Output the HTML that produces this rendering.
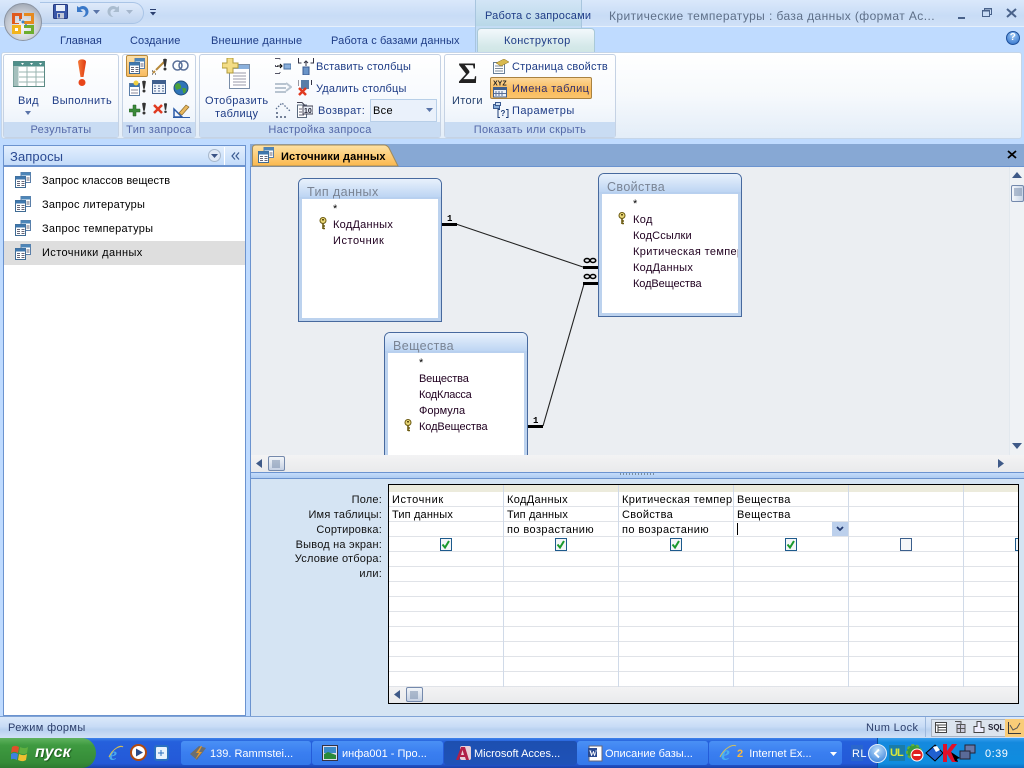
<!DOCTYPE html>
<html><head><meta charset="utf-8"><title>Access</title>
<style>
html,body{margin:0;padding:0;width:1024px;height:768px;overflow:hidden;background:#bfdbff}
body{position:relative;font:11px/14px "Liberation Sans",sans-serif;letter-spacing:.35px;color:#000}
div,span,svg{position:absolute;box-sizing:border-box}
.t{white-space:nowrap;height:14px;margin-top:1px}
.b{color:#1e3c86}
.c{color:#5468a8;text-align:center}
.g{position:absolute;top:54px;height:84px;border:1px solid #c5d2e4;border-radius:3px;background:linear-gradient(#fff 0,#f6f9fd 60%,#e6eff9 100%)}
.cap{position:absolute;left:0;right:0;bottom:0;height:15px;background:#c9dcf3;color:#5468a8;text-align:center;line-height:16px;letter-spacing:.3px}
.tb{position:absolute;width:144px;background:#fff;border:1px solid #47699e;border-radius:6px 6px 0 0;}
.tb .h{left:0;right:0;top:0;height:20px;background:linear-gradient(#e8f1fc,#bdd5f3);border-radius:5px 5px 0 0;border-bottom:2px solid #b8d0ef;color:#7a8494;font-size:12.5px;line-height:24px;padding-left:8px;letter-spacing:.4px}
.tb .in{left:0;right:0;top:20px;bottom:0;border-left:3px solid #bcd2ee;border-right:3px solid #bcd2ee;border-bottom:3px solid #bcd2ee;background:#fff}
.f{color:#200020}
.lbl{position:absolute;right:642px;text-align:right;white-space:nowrap;color:#111;height:14px;margin-top:1px;letter-spacing:.2px}
.tbtn{position:absolute;top:741px;height:24px;border-radius:3px;background:linear-gradient(#4a90f5,#3a7ef0 50%,#3479ea);color:#fff;line-height:26px;white-space:nowrap;letter-spacing:0}
.chk{position:absolute;width:12px;height:13px;background:#f4f6f8;border:1px solid #1d5a8c}
</style></head><body>
<svg width="0" height="0" style="position:absolute"><defs>
<symbol id="q" viewBox="0 0 16 16"><rect x="6" y="0.5" width="9.5" height="10" fill="#fff" stroke="#5a7ea8"/><rect x="6" y="0.5" width="9.5" height="3" fill="#4d86b8"/><rect x="0.5" y="4.5" width="10" height="11" fill="#fff" stroke="#3f6b94"/><rect x="0.5" y="4.5" width="10" height="3" fill="#3f77ad"/><path d="M2 9.5h3M2 11.5h3M2 13.5h3M6.5 9.5h3M6.5 11.5h3M6.5 13.5h3M11.5 6h3M11.5 8h3" stroke="#667" fill="none"/></symbol>
<symbol id="key" viewBox="0 0 9 13"><circle cx="4" cy="3.5" r="3" fill="#e8d676" stroke="#6b5a10"/><path d="M4 6v6M4 9h2M4 11.500h2" stroke="#6b5a10" fill="none" stroke-width="1.600"/><rect x="3" y="2" width="2" height="1.500" fill="#5a4a10"/></symbol>
<symbol id="ex" viewBox="0 0 8 16"><path d="M1.500 1.500C1.500 0 6.500 0 6.500 1.500L5 11H3z" fill="#333"/><circle cx="4" cy="14" r="2" fill="#333"/></symbol>
<symbol id="ck" viewBox="0 0 12 13"><path d="M2.500 6.500l2.500 3 4-6.500" stroke="#1a9a2c" stroke-width="2" fill="none"/></symbol>
</defs></svg>

<!-- title bar -->
<div style="left:0;top:0;width:1024px;height:26px;background:linear-gradient(#dae8fb,#c8dcf6 60%,#cfe0f7)"></div>
<div style="left:0;top:26px;width:1024px;height:1px;background:#e6f0fc"></div>
<div style="left:40px;top:2px;width:104px;height:22px;border:1px solid #a9c4e6;border-left:none;border-radius:0 12px 12px 0;background:linear-gradient(#dfeafa,#c0d4ef)"></div>
<!-- QAT -->
<svg style="left:53px;top:4px" width="15" height="15" viewBox="0 0 15 15"><rect x=".5" y=".5" width="14" height="14" rx="1" fill="#3a57a8" stroke="#273b80"/><rect x="3" y="1" width="9" height="6" fill="#e8eef8"/><rect x="4" y="9" width="7" height="5.500" fill="#c3c8d6"/><rect x="5" y="10" width="2" height="3.500" fill="#3a57a8"/></svg>
<svg style="left:75px;top:4px" width="14" height="15" viewBox="0 0 14 15"><path d="M2 2v6h6L5.500 5.800C8 4 11 6 10.500 9c-.3 2-1.500 3-3 4 4 0 6-2.500 6-5.500C13.500 3 8 0 4 3.500z" fill="#3a78c8"/></svg>
<svg style="left:93px;top:10px" width="7" height="4"><path d="M0 0h7L3.500 4z" fill="#5a74a8"/></svg>
<svg style="left:107px;top:4px" width="14" height="15" viewBox="0 0 14 15"><path d="M12 2v6H6l2.500-2.200C6 4 3 6 3.500 9c.3 2 1.500 3 3 4-4 0-6-2.500-6-5.500C.5 3 6 0 10 3.500z" fill="#aabccf"/></svg>
<svg style="left:126px;top:10px" width="7" height="4"><path d="M0 0h7L3.500 4z" fill="#a5b6cc"/></svg>
<svg style="left:150px;top:9px" width="7" height="7"><path d="M0 0h6v1H0zM0 3h6L3 6.500z" fill="#2a3f70"/></svg>

<!-- contextual header -->
<div style="left:475px;top:0;width:107px;height:26px;background:linear-gradient(#d3e5f6,#b9d8e8);border-left:1px solid #a8c5de;border-right:1px solid #a8c5de"></div>
<div class="t b" style="left:485px;top:8px;letter-spacing:.2px">Работа с запросами</div>
<div class="t" style="left:609px;top:8px;color:#5e6f88;font-size:12px;letter-spacing:.41px">Критические температуры : база данных (формат Ac...</div>
<div style="left:958px;top:17px;width:7px;height:2px;background:#49628a"></div>
<svg style="left:982px;top:8px" width="10" height="9"><rect x="2.500" y=".5" width="7" height="6" fill="none" stroke="#49628a"/><rect x=".5" y="2.500" width="7" height="6" fill="#c8dcf6" stroke="#49628a"/><path d="M.5 3h7M2.500 1h7" stroke="#49628a"/></svg>
<svg style="left:1006px;top:8px" width="11" height="10"><path d="M1 1l9 8M10 1L1 9" stroke="#49628a" stroke-width="2"/></svg>

<!-- tabs row -->
<div style="left:0;top:27px;width:1024px;height:26px;background:#bfdbff"></div>
<div class="t b" style="left:60px;top:33px;letter-spacing:0">Главная</div>
<div class="t b" style="left:130px;top:33px;letter-spacing:.1px">Создание</div>
<div class="t b" style="left:211px;top:33px;letter-spacing:.2px">Внешние данные</div>
<div class="t b" style="left:331px;top:33px;letter-spacing:.12px">Работа с базами данных</div>
<div style="left:475px;top:26px;width:107px;height:26px;border-left:1px solid #a8c5de;border-right:1px solid #a8c5de;background:linear-gradient(#c3dcf3,#bfdbff)"></div>
<div style="left:477px;top:28px;width:118px;height:25px;border:1px solid #a9c9d8;border-bottom:none;border-radius:4px 4px 0 0;background:linear-gradient(#f3f8fc,#d5e9ea 70%,#cfe6e4)"></div>
<div class="t b" style="left:504px;top:33px">Конструктор</div>
<div style="left:1006px;top:31px;width:14px;height:14px;border-radius:50%;background:radial-gradient(circle at 50% 30%,#9cc8f5,#2a6cc8);border:1px solid #1d4f9a;color:#fff;font:bold 10px/12px 'Liberation Sans';text-align:center">?</div>

<!-- office button -->
<div style="left:4px;top:3px;width:38px;height:38px;border-radius:50%;background:radial-gradient(circle at 50% 65%,#f7f7f7,#c4c9d2 55%,#8f98a5 95%);border:1px solid #8b94a2"></div>
<svg style="left:11px;top:11px" width="24" height="24" viewBox="0 0 24 24"><path d="M1 2h10v6H8V5H4v7h4v1H1z" fill="#e05a1c"/><path d="M13 2h10v11H13v-3h7V5h-7z" fill="#e68a1e"/><path d="M1 14h9v9H1z" fill="#f2b41c"/><path d="M13 14h10v9H13v-3h7v-3h-7z" fill="#6dae2e"/><rect x="4" y="17" width="3" height="3" fill="#fff"/><circle cx="12" cy="11" r="1.500" fill="#3b82c4"/><circle cx="9" cy="9" r="1" fill="#3b82c4"/><circle cx="15" cy="14" r="1" fill="#3b82c4"/></svg>

<!-- ribbon -->
<div style="left:1px;top:52px;width:1021px;height:87px;border:1px solid #c5d5e8;border-radius:3px;background:linear-gradient(#fff,#f6f9fc 50%,#e3edf8)"></div>

<div class="g" style="left:3px;width:116px"><div class="cap">Результаты</div></div>
<svg style="left:13px;top:61px" width="32" height="26" viewBox="0 0 32 26"><rect x=".5" y=".5" width="31" height="25" fill="#fff" stroke="#5a8a84"/><rect x=".5" y=".5" width="31" height="5" fill="#4f8f8a"/><rect x=".5" y="5" width="5" height="20" fill="#a5c0bd"/><path d="M6 11h25M6 16h25M6 21h25M14 5v20M23 5v20" stroke="#9ab4b0"/><path d="M8 2h3l-1.500 2zM17 2h3l-1.500 2zM26 2h3l-1.500 2z" fill="#fff"/></svg>
<div class="t b" style="left:18px;top:93px">Вид</div>
<svg style="left:25px;top:111px" width="6" height="4"><path d="M0 0h6L3 4z" fill="#5a74a8"/></svg>
<svg style="left:76px;top:59px" width="12" height="28" viewBox="0 0 12 28"><defs><linearGradient id="rg" x1="0" x2="1"><stop offset="0" stop-color="#f47a3a"/><stop offset="1" stop-color="#e03a10"/></linearGradient></defs><path d="M2 3C2-.5 10-.5 10 3L7.500 18h-3z" fill="url(#rg)"/><circle cx="6" cy="23.500" r="3.500" fill="#e8451a"/></svg>
<div class="t b" style="left:52px;top:93px;letter-spacing:.4px">Выполнить</div>

<div class="g" style="left:122px;width:74px"><div class="cap">Тип запроса</div></div>
<div style="left:126px;top:55px;width:22px;height:22px;background:linear-gradient(#fce0a8,#f9bc60);border:1px solid #b98a3c;border-radius:2px"></div>
<svg style="left:129px;top:58px" width="16" height="16"><use href="#q"/></svg>
<svg style="left:151px;top:58px" width="17" height="17" viewBox="0 0 17 17"><path d="M2 15l2-2M5 12l8-8" stroke="#b88a3c" stroke-width="2"/><path d="M1 16h1M1 13h1M4 16h1" stroke="#222"/><use href="#ex" x="11" y="0" width="6" height="13"/></svg>
<svg style="left:172px;top:59px" width="17" height="13" viewBox="0 0 17 13"><circle cx="5.500" cy="6.500" r="4.500" fill="none" stroke="#5a7098" stroke-width="1.500"/><circle cx="11.500" cy="6.500" r="4.500" fill="none" stroke="#5a7098" stroke-width="1.500"/></svg>
<svg style="left:129px;top:80px" width="18" height="16" viewBox="0 0 18 16"><rect x=".5" y="3.500" width="10" height="12" fill="#fff" stroke="#5a7ea8"/><rect x="1" y="4" width="9" height="3" fill="#3f77ad"/><path d="M2 10h7M2 13h7" stroke="#889"/><circle cx="7" cy="3" r="2.500" fill="#f0d040"/><use href="#ex" x="12" y="0" width="6" height="13"/></svg>
<svg style="left:152px;top:80px" width="14" height="14" viewBox="0 0 14 14"><rect x=".5" y=".5" width="13" height="13" fill="#eef3fa" stroke="#3f5f8e"/><rect x="1" y="1" width="12" height="3" fill="#3f5f8e"/><path d="M2 6h2M6 6h2M10 6h2M2 8.500h2M6 8.500h2M10 8.500h2M2 11h2M6 11h2M10 11h2" stroke="#5a7098"/></svg>
<svg style="left:173px;top:80px" width="16" height="16" viewBox="0 0 16 16"><circle cx="8" cy="8" r="7" fill="#2f74b8" stroke="#20507f"/><path d="M3 4c3-2 4 0 5 2s-1 3-2 3-2 2-3 0-2-3 0-5zM10 8c2 0 4 0 3 3s-3 3-3 1-2-4 0-4z" fill="#4aa03a"/></svg>
<svg style="left:129px;top:102px" width="18" height="16" viewBox="0 0 18 16"><path d="M4 3h3v4h4v3H7v4H4v-4H0V7h4z" fill="#3a8a3a" stroke="#205a20" stroke-width=".5"/><use href="#ex" x="12" y="0" width="6" height="13"/></svg>
<svg style="left:153px;top:102px" width="15" height="15" viewBox="0 0 15 15"><path d="M1 3l8 8M9 3l-8 8" stroke="#e03a20" stroke-width="2.500"/><use href="#ex" x="10" y="0" width="5" height="12"/></svg>
<svg style="left:173px;top:103px" width="17" height="15" viewBox="0 0 17 15"><path d="M1 14V6l8 8z" fill="none" stroke="#2a5aa8" stroke-width="1.500"/><path d="M0 14.500h17" stroke="#2a5aa8"/><path d="M6 10l7-8 3 2-7 8z" fill="#e8b860" stroke="#806020" stroke-width=".6"/></svg>

<div class="g" style="left:199px;width:242px"><div class="cap">Настройка запроса</div></div>
<svg style="left:222px;top:58px" width="28" height="31" viewBox="0 0 28 31"><rect x="7.500" y="6.500" width="20" height="24" fill="#fff" stroke="#7a8ea8"/><rect x="8" y="7" width="19" height="4" fill="#8ab0dc"/><path d="M11 15h13M11 18h13M11 21h13M11 24h13M11 27h13" stroke="#99a"/><path d="M5 0h6v5h5v5h-5v5H5v-5H0V5h5z" fill="#f3dd86" stroke="#b09a3a"/></svg>
<div class="t b" style="left:205px;top:93px">Отобразить</div>
<div class="t b" style="left:215px;top:106px;letter-spacing:.3px">таблицу</div>
<svg style="left:275px;top:58px" width="16" height="16" viewBox="0 0 16 16"><path d="M0 .5h5M5 .5v1M0 7.500h1M0 15.500h5M5 15v-1M0 8.500h3" stroke="#556" fill="none"/><path d="M2 8h5M5 6l2 2-2 2" stroke="#000" fill="none"/><rect x="9" y="6" width="7" height="5" fill="#8ab0dc" stroke="#4a70a0"/></svg>
<svg style="left:298px;top:58px" width="16" height="17" viewBox="0 0 16 17"><path d="M.5 0v5h3M15.500 0v5h-3M8 3v5M6 5l2-2 2 2" stroke="#334" fill="none"/><rect x="5" y="9" width="6" height="8" fill="#6a94c8" stroke="#3a5a90"/></svg>
<div class="t b" style="left:316px;top:59px;letter-spacing:.13px">Вставить столбцы</div>
<svg style="left:275px;top:80px" width="17" height="15" viewBox="0 0 17 15"><rect x="0" y="3" width="11" height="2" fill="#b8c4d0"/><rect x="0" y="7" width="11" height="2" fill="#b8c4d0"/><rect x="0" y="11" width="11" height="2" fill="#b8c4d0"/><path d="M11 3l5 4-5 4" fill="none" stroke="#b8c4d0" stroke-width="2"/></svg>
<svg style="left:298px;top:80px" width="14" height="16" viewBox="0 0 14 16"><rect x="3" y="0" width="8" height="9" fill="#5a7ea8"/><path d="M0 0v6M13.500 0v5" stroke="#334"/><path d="M1 8l7 7M8 8l-7 7" stroke="#e03a20" stroke-width="2.500"/></svg>
<div class="t b" style="left:316px;top:81px;letter-spacing:.15px">Удалить столбцы</div>
<svg style="left:275px;top:102px" width="16" height="16" viewBox="0 0 16 16"><path d="M1 7l6-6 8 8" fill="none" stroke="#5a6e90" stroke-dasharray="1.500 1.500" stroke-width="1.300"/><path d="M1 15h2M5 15h2M9 15h2M1 11h2" stroke="#4a5a78" stroke-width="1.500"/></svg>
<svg style="left:297px;top:102px" width="16" height="16" viewBox="0 0 16 16"><rect x=".5" y="3" width="9" height="12.500" fill="#fff" stroke="#5a6a7e"/><path d="M0 .5h5l3 3" stroke="#445" fill="none"/><rect x="6" y="4" width="10" height="8" fill="#e8eef6" stroke="#445"/><text x="7" y="11" font-size="7" font-weight="bold" font-family="Liberation Sans" letter-spacing="0" fill="#223">10</text><path d="M2 7h3M2 10h3M2 13h5" stroke="#667"/></svg>
<div class="t b" style="left:318px;top:103px">Возврат:</div>
<div style="left:370px;top:99px;width:67px;height:23px;border:1px solid #b8cfe8;background:#eaf1fb"></div>
<div class="t" style="left:373px;top:103px">Все</div>
<svg style="left:426px;top:108px" width="7" height="4"><path d="M0 0h7L3.500 4z" fill="#5a74a8"/></svg>

<div class="g" style="left:444px;width:172px"><div class="cap">Показать или скрыть</div></div>
<div class="t" style="left:458px;top:57px;font:bold 30px/32px 'Liberation Serif',serif;color:#222;height:32px;letter-spacing:0">Σ</div>
<div class="t b" style="left:452px;top:93px;color:#24406e">Итоги</div>
<svg style="left:493px;top:59px" width="16" height="15" viewBox="0 0 16 15"><rect x=".5" y="3.500" width="11" height="11" fill="#fff" stroke="#667e98"/><path d="M2 7h8M2 9.500h8M2 12h8" stroke="#7a8a9a"/><path d="M3 4l8-4 5 3-8 4z" fill="#d8ba50" stroke="#8a7020" stroke-width=".5"/></svg>
<div class="t b" style="left:512px;top:59px;letter-spacing:.2px">Страница свойств</div>
<div style="left:490px;top:77px;width:102px;height:22px;background:linear-gradient(#fcd79a,#f9ba5a 60%,#fbc56e);border:1px solid #a98240;border-radius:2px"></div>
<svg style="left:493px;top:79px" width="15" height="19" viewBox="0 0 15 19"><text x="0" y="6.500" font-size="7" font-weight="bold" font-family="Liberation Sans" letter-spacing="0" fill="#222">XYZ</text><rect x=".5" y="8.500" width="13" height="9.500" fill="#eef3fa" stroke="#3f5f8e"/><rect x="1" y="9" width="12" height="2" fill="#3f5f8e"/><path d="M3 12v5M6 12v5M9 12v5M1 14.500h12" stroke="#5a7098"/></svg>
<div class="t" style="left:512px;top:81px;color:#33306e;letter-spacing:.4px">Имена таблиц</div>
<svg style="left:493px;top:102px" width="16" height="16" viewBox="0 0 16 16"><rect x=".5" y="2.500" width="6" height="4" fill="#8ab0dc" stroke="#3a5a90"/><rect x="2.500" y=".5" width="5" height="3" fill="#cfe0f5" stroke="#3a5a90"/><path d="M8 7.500H6v8h2M14 7.500h2v8h-2" stroke="#1f3f78" fill="none" transform="translate(-1 0)"/><text x="7.500" y="14" font-size="8" font-weight="bold" font-family="Liberation Sans" letter-spacing="0" fill="#1f3f78">?</text></svg>
<div class="t b" style="left:512px;top:103px;letter-spacing:.45px">Параметры</div>

<!-- middle bg -->
<div style="left:0;top:140px;width:1024px;height:5px;background:#bfdbff"></div>
<div style="left:0;top:145px;width:250px;height:571px;background:#bfdbff"></div>

<!-- nav pane -->
<div style="left:3px;top:145px;width:243px;height:22px;background:linear-gradient(#e3effd,#c3dbf9);border:1px solid #6b93cf;border-bottom:2px solid #6b93cf"></div>
<div class="t" style="left:10px;top:149px;font-size:13px;color:#2b4a92;letter-spacing:.1px">Запросы</div>
<div style="left:208px;top:149px;width:13px;height:13px;border-radius:50%;background:#dfe8f5;border:1px solid #a8b8cc"></div>
<svg style="left:211px;top:154px" width="7" height="4"><path d="M0 0h7L3.500 4z" fill="#3a5284"/></svg>
<div style="left:224px;top:147px;width:1px;height:18px;background:#fff"></div>
<svg style="left:231px;top:152px" width="9" height="8"><path d="M4 .5L1 4l3 3.500M8 .5L5 4l3 3.500" stroke="#3a5a90" fill="none" stroke-width="1.200"/></svg>
<div style="left:3px;top:167px;width:243px;height:549px;background:#fff;border-left:1px solid #6b93cf;border-right:1px solid #6b93cf;border-bottom:1px solid #6b93cf"></div>
<div style="left:4px;top:241px;width:241px;height:24px;background:#dedede"></div>
<svg style="left:15px;top:172px" width="16" height="16"><use href="#q"/></svg>
<svg style="left:15px;top:196px" width="16" height="16"><use href="#q"/></svg>
<svg style="left:15px;top:220px" width="16" height="16"><use href="#q"/></svg>
<svg style="left:15px;top:244px" width="16" height="16"><use href="#q"/></svg>
<div class="t" style="left:42px;top:173px;letter-spacing:.08px">Запрос классов веществ</div>
<div class="t" style="left:42px;top:197px;letter-spacing:.2px">Запрос литературы</div>
<div class="t" style="left:42px;top:221px;letter-spacing:.25px">Запрос температуры</div>
<div class="t" style="left:42px;top:245px;letter-spacing:.4px">Источники данных</div>

<!-- document tabs -->
<div style="left:250px;top:144px;width:774px;height:23px;background:#87a8d4;border-bottom:1px solid #6b93cf"></div>
<svg style="left:252px;top:144px" width="148" height="23" viewBox="0 0 148 23"><defs><linearGradient id="tg" x1="0" y1="0" x2="0" y2="1"><stop offset="0" stop-color="#fde2a6"/><stop offset="1" stop-color="#fbb84e"/></linearGradient></defs><path d="M.5 22V4Q.5 1 4 1H132Q135 1 137 4L146 22z" fill="url(#tg)" stroke="#a08a5a"/></svg>
<svg style="left:258px;top:147px" width="16" height="16"><use href="#q"/></svg>
<div class="t" style="left:281px;top:149px;font-weight:bold;letter-spacing:.12px">Источники данных</div>
<svg style="left:1007px;top:150px" width="10" height="9"><path d="M1 1l8 7M9 1L1 8" stroke="#000" stroke-width="1.800"/></svg>

<!-- query area -->
<div style="left:250px;top:167px;width:774px;height:549px;background:#d5e4f3;border-left:1px solid #6b93cf"></div>
<div style="left:251px;top:167px;width:758px;height:288px;background:#ebeef2"></div>

<!-- relationships -->
<svg style="left:251px;top:167px" width="758" height="288" viewBox="251 167 758 288"><path d="M456 224L583 267M543 426L584 284" stroke="#222" fill="none" stroke-width="1.100"/><path d="M442 224.500h15M583 267.500h15M583 283.500h15M528 426.500h15" stroke="#000" stroke-width="3"/><text x="447" y="221" font-size="9" font-weight="bold" font-family="Liberation Mono" letter-spacing="0">1</text><text x="533" y="423" font-size="9" font-weight="bold" font-family="Liberation Mono" letter-spacing="0">1</text><g fill="none" stroke="#000" stroke-width="1.600"><ellipse cx="587" cy="260.500" rx="2.700" ry="2"/><ellipse cx="593" cy="260.500" rx="2.700" ry="2"/><ellipse cx="587" cy="276.500" rx="2.700" ry="2"/><ellipse cx="593" cy="276.500" rx="2.700" ry="2"/></g></svg>

<!-- tables -->
<div class="tb" style="left:298px;top:178px;height:144px"><div class="h" style="line-height:26px">Тип данных</div><div class="in"></div></div>
<div class="t" style="left:333px;top:201px">*</div>
<svg style="left:319px;top:217px" width="9" height="13"><use href="#key"/></svg>
<div class="t f" style="left:333px;top:217px;letter-spacing:.25px">КодДанных</div>
<div class="t f" style="left:333px;top:233px;letter-spacing:.55px">Источник</div>

<div class="tb" style="left:598px;top:173px;height:144px"><div class="h" style="line-height:26px">Свойства</div><div class="in"></div></div>
<div class="t" style="left:633px;top:196px">*</div>
<svg style="left:618px;top:212px" width="9" height="13"><use href="#key"/></svg>
<div class="t f" style="left:633px;top:212px">Код</div>
<div class="t f" style="left:633px;top:228px;letter-spacing:.15px">КодСсылки</div>
<div class="t f" style="left:633px;top:244px;width:105px;overflow:hidden">Критическая температура</div>
<div class="t f" style="left:633px;top:260px;letter-spacing:.25px">КодДанных</div>
<div class="t f" style="left:633px;top:276px;letter-spacing:-.1px">КодВещества</div>

<div style="left:384px;top:332px;width:144px;height:123px;overflow:hidden">
<div class="tb" style="left:0;top:0;height:144px"><div class="h" style="line-height:26px">Вещества</div><div class="in"></div></div>
</div>
<div class="t" style="left:419px;top:355px">*</div>
<div class="t f" style="left:419px;top:371px;letter-spacing:-.15px">Вещества</div>
<div class="t f" style="left:419px;top:387px;letter-spacing:-.25px">КодКласса</div>
<div class="t f" style="left:419px;top:403px;letter-spacing:0">Формула</div>
<svg style="left:404px;top:419px" width="9" height="13"><use href="#key"/></svg>
<div class="t f" style="left:419px;top:419px;letter-spacing:-.1px">КодВещества</div>

<!-- upper scrollbars -->
<div style="left:1009px;top:167px;width:15px;height:288px;background:#eff2f5;border-left:1px solid #e2e8ee"></div>
<svg style="left:1012px;top:172px" width="10" height="6"><path d="M0 6h10L5 0z" fill="#3f5a88"/></svg>
<div style="left:1011px;top:185px;width:13px;height:17px;background:linear-gradient(90deg,#f5f8fc,#c8d4e6);border:1px solid #7489ac;border-radius:2px"></div>
<svg style="left:1014px;top:188px" width="8" height="10"><path d="M0 1h8M0 3h8M0 5h8M0 7h8" stroke="#7489a8"/></svg>
<svg style="left:1012px;top:443px" width="10" height="6"><path d="M0 0h10L5 6z" fill="#3f5a88"/></svg>
<div style="left:251px;top:455px;width:773px;height:17px;background:linear-gradient(#f3f3f4,#e9eaec)"></div>
<svg style="left:256px;top:459px" width="6" height="9"><path d="M6 0v9L0 4.500z" fill="#3f5a88"/></svg>
<svg style="left:998px;top:459px" width="6" height="9"><path d="M0 0v9l6-4.500z" fill="#3f5a88"/></svg>
<div style="left:268px;top:456px;width:17px;height:15px;background:linear-gradient(#f2f5f9,#c6d1e3);border:1px solid #7489ac;border-radius:2px"></div>
<svg style="left:272px;top:459px" width="9" height="9"><path d="M1 1v8M3 1v8M5 1v8M7 1v8" stroke="#7489a8"/></svg>
<!-- splitter -->
<div style="left:251px;top:472px;width:773px;height:7px;background:linear-gradient(#c4dcfb,#aecbf1);border-top:1px solid #6b93cf;border-bottom:1px solid #6b93cf"></div>
<svg style="left:620px;top:473px" width="36" height="3"><path d="M0 1h36" stroke="#344" stroke-dasharray="1 2" /></svg>

<!-- grid -->
<div style="left:388px;top:484px;width:631px;height:220px;background:#fff;border:1px solid #000"></div>
<div style="left:389px;top:485px;width:629px;height:7px;background:#ecebdc"></div>
<svg style="left:389px;top:485px" width="629" height="202" viewBox="389 485 629 202"><path d="M389 506.500h630M389 521.500h630M389 536.500h630M389 551.500h630M389 566.500h630M389 581.500h630M389 596.500h630M389 611.500h630M389 626.500h630M389 641.500h630M389 656.500h630M389 671.500h630M389 686.500h630" stroke="#e0e3e8"/><path d="M503.500 485v202M618.500 485v202M733.500 485v202M848.500 485v202M963.500 485v202" stroke="#d0dae8"/></svg>
<div class="lbl" style="top:492px">Поле:</div>
<div class="lbl" style="top:507px">Имя таблицы:</div>
<div class="lbl" style="top:522px">Сортировка:</div>
<div class="lbl" style="top:537px">Вывод на экран:</div>
<div class="lbl" style="top:551px">Условие отбора:</div>
<div class="lbl" style="top:566px">или:</div>
<div class="t" style="left:392px;top:492px;letter-spacing:.6px">Источник</div>
<div class="t" style="left:507px;top:492px">КодДанных</div>
<div class="t" style="left:622px;top:492px;width:110px;overflow:hidden">Критическая температура</div>
<div class="t" style="left:737px;top:492px">Вещества</div>
<div class="t" style="left:392px;top:507px;letter-spacing:.15px">Тип данных</div>
<div class="t" style="left:507px;top:507px;letter-spacing:.15px">Тип данных</div>
<div class="t" style="left:622px;top:507px">Свойства</div>
<div class="t" style="left:737px;top:507px">Вещества</div>
<div class="t" style="left:507px;top:522px;letter-spacing:.42px">по возрастанию</div>
<div class="t" style="left:622px;top:522px;letter-spacing:.42px">по возрастанию</div>
<div style="left:737px;top:523px;width:1px;height:12px;background:#000"></div>
<div style="left:832px;top:522px;width:16px;height:14px;background:#bcd0ec"></div>
<svg style="left:836px;top:526px" width="8" height="6"><path d="M1 1l3 3 3-3" stroke="#223a70" stroke-width="1.800" fill="none"/></svg>
<div class="chk" style="left:440px;top:538px"><svg style="left:-1px;top:-1px" width="12" height="13"><use href="#ck"/></svg></div>
<div class="chk" style="left:555px;top:538px"><svg style="left:-1px;top:-1px" width="12" height="13"><use href="#ck"/></svg></div>
<div class="chk" style="left:670px;top:538px"><svg style="left:-1px;top:-1px" width="12" height="13"><use href="#ck"/></svg></div>
<div class="chk" style="left:785px;top:538px"><svg style="left:-1px;top:-1px" width="12" height="13"><use href="#ck"/></svg></div>
<div class="chk" style="left:900px;top:538px;border-color:#3b5f8c"></div>
<div class="chk" style="left:1015px;top:538px;width:3px;border-right:none"></div>
<!-- grid hscroll -->
<div style="left:389px;top:687px;width:629px;height:16px;background:linear-gradient(#f3f3f4,#e9eaec)"></div>
<svg style="left:394px;top:690px" width="6" height="9"><path d="M6 0v9L0 4.500z" fill="#3f5a88"/></svg>
<div style="left:406px;top:687px;width:17px;height:15px;background:linear-gradient(#f2f5f9,#c6d1e3);border:1px solid #7489ac;border-radius:2px"></div>
<svg style="left:410px;top:690px" width="9" height="9"><path d="M1 1v8M3 1v8M5 1v8M7 1v8" stroke="#7489a8"/></svg>

<!-- status bar -->
<div style="left:0;top:716px;width:1024px;height:22px;background:linear-gradient(#dbe9fa,#c8dcf6 45%,#b9d1f0 60%,#d0e0f6);border-top:1px solid #7fa3d6"></div>
<div class="t" style="left:8px;top:720px;color:#2b3d6a">Режим формы</div>
<div class="t" style="left:866px;top:720px;color:#2b3d6a">Num Lock</div>
<div style="left:925px;top:717px;width:1px;height:20px;background:#9db8dc"></div>
<div style="left:931px;top:719px;width:99px;height:18px;background:#dce4ee;border:1px solid #a8b4c4"></div>
<div style="left:1005px;top:719px;width:19px;height:18px;background:#f9cc78"></div>
<svg style="left:935px;top:722px" width="12" height="11"><rect x=".5" y=".5" width="11" height="10" fill="#fff" stroke="#444"/><path d="M.5 3h11M3 3v7M3 5.500h8M3 8h8" stroke="#444"/></svg>
<svg style="left:954px;top:721px" width="12" height="12"><path d="M3 3.500h8v8H3zM6.500 3.500v8M3 7.500h8M1 .5h6v3" stroke="#555" fill="#ccd" /></svg>
<svg style="left:973px;top:721px" width="12" height="12"><path d="M1 11.500h10v-5H8v-6H4v5H1z" stroke="#444" fill="#eef"/></svg>
<div class="t" style="left:988px;top:720px;font-size:8px;font-weight:bold;color:#223;letter-spacing:0">SQL</div>
<svg style="left:1008px;top:722px" width="13" height="12"><path d="M.5 0v11.500H13" stroke="#3a3a3a" fill="none"/><path d="M2 3l3 5 4-2 3-5" stroke="#555" fill="none"/></svg>

<!-- taskbar -->
<div style="left:0;top:738px;width:1024px;height:30px;background:linear-gradient(#3d83ea,#2560dc 12%,#2459d8 85%,#1a42a8)"></div>
<div style="left:0;top:738px;width:96px;height:30px;border-radius:0 14px 14px 0/0 15px 15px 0;background:linear-gradient(#5fb25f,#3e9a40 25%,#368c38 80%,#2e7a30)"></div>
<svg style="left:11px;top:744px" width="19" height="18" viewBox="0 0 19 18"><path d="M1 3c3-2 5-1 7 0L7 9C5 8 3 7 0 9z" fill="#e0502a"/><path d="M9 3c2 1 5 2 8 0l-1 6c-3 2-6 1-8 0z" fill="#60b040"/><path d="M0 10c3-2 5-1 7 0l-1 6c-2-1-4-2-7 0z" fill="#4080e0"/><path d="M8 10c2 1 5 2 8 0l-1 6c-3 2-6 1-8 0z" fill="#f0c030"/></svg>
<div class="t" style="left:35px;top:744px;height:16px;font:italic bold 16px/16px 'Liberation Sans',sans-serif;color:#fff;letter-spacing:0;text-shadow:1px 1px 1px #1d5a1d">пуск</div>
<svg style="left:108px;top:745px" width="16" height="17" viewBox="0 0 16 17"><text x="1" y="15" font-size="18" font-style="italic" font-weight="bold" font-family="Liberation Serif" letter-spacing="0" fill="#4aa8ee">e</text><path d="M1 12C5 3 13 0 15 2" stroke="#d8c050" fill="none"/></svg>
<svg style="left:130px;top:744px" width="17" height="17"><circle cx="8.500" cy="8.500" r="7.500" fill="#fff" stroke="#b04a10" stroke-width="2"/><path d="M6 4.500l7 4-7 4z" fill="#2a4a88"/></svg>
<svg style="left:154px;top:745px" width="16" height="16"><rect x="1" y="1" width="13" height="14" rx="2" fill="#e8f2fc" stroke="#2a70c0" stroke-width="2"/><path d="M4 8h6M7 5v6" stroke="#2a70c0"/></svg>

<div class="tbtn" style="left:181px;width:130px;padding-left:29px">139. Rammstei...</div>
<svg style="left:189px;top:745px" width="18" height="17" viewBox="0 0 18 17"><path d="M1 9L10 1l7 2-9 12z" fill="#6a6e70"/><path d="M12 1L7 8h3l-4 7 7-8h-3l3-6z" fill="#e89a2a"/></svg>
<div class="tbtn" style="left:312px;width:131px;padding-left:30px">инфа001 - Про...</div>
<svg style="left:322px;top:745px" width="16" height="16"><rect x=".5" y=".5" width="15" height="15" fill="#dde" stroke="#334"/><rect x="2" y="2" width="12" height="6" fill="#3a8ac8"/><path d="M2 14V9l4-2 8 3v4z" fill="#2a8a3a"/></svg>
<div class="tbtn" style="left:444px;width:133px;padding-left:30px;background:linear-gradient(#1d4fb0,#1e52b8);">Microsoft Acces...</div>
<svg style="left:455px;top:745px" width="17" height="17" viewBox="0 0 17 17"><rect x="5" y="1" width="11" height="14" rx="2" fill="#e8d0d8"/><path d="M1 15L6 2h4l4 13h-3l-1-3H5l-1 3zM6 10h3L7.500 5z" fill="#b02048"/></svg>
<div class="tbtn" style="left:577px;width:131px;padding-left:28px">Описание базы...</div>
<svg style="left:587px;top:745px" width="16" height="17"><rect x="2" y="1" width="13" height="15" fill="#fff" stroke="#667"/><rect x="1" y="3" width="9" height="9" fill="#2a4a90"/><text x="2" y="11" font-size="8" font-weight="bold" font-family="Liberation Serif" letter-spacing="0" fill="#fff">W</text></svg>
<div class="tbtn" style="left:709px;width:133px;padding-left:28px"><span style="position:static;color:#f8b840;font-weight:bold">2</span>&nbsp; Internet Ex...</div>
<svg style="left:719px;top:744px" width="18" height="18" viewBox="0 0 18 18"><text x="2" y="16" font-size="20" font-style="italic" font-weight="bold" font-family="Liberation Serif" letter-spacing="0" fill="#4ab0f0">e</text><path d="M1 13C5 4 14 0 17 2" stroke="#d0c060" fill="none"/></svg>
<svg style="left:830px;top:752px" width="7" height="4"><path d="M0 0h7L3.500 4z" fill="#fff"/></svg>

<div style="left:851px;top:745px;width:12px;height:16px;background:#2a66cc"></div>
<div class="t" style="left:852px;top:746px;color:#fff;letter-spacing:.4px">RL</div>
<div style="left:877px;top:738px;width:147px;height:30px;background:linear-gradient(#3aa0ee,#1489de 15%,#0f8ddf 85%,#0e6cc0);border-left:1px solid #0a4a9a"></div>
<div style="left:868px;top:744px;width:19px;height:19px;border-radius:50%;background:radial-gradient(circle at 50% 30%,#bfe0fa,#2a76d8);border:1px solid #e4f0fa"></div>
<svg style="left:874px;top:749px" width="6" height="9"><path d="M5 .5L1 4.500l4 4" stroke="#fff" stroke-width="2" fill="none"/></svg>
<div style="left:889px;top:745px;width:16px;height:16px;background:#1a7ca8"></div>
<div class="t" style="left:890px;top:745px;font-weight:bold;color:#d8e83a;letter-spacing:-1px">UL</div>
<svg style="left:906px;top:744px" width="18" height="18"><circle cx="8" cy="8" r="7" fill="#3a9a3a" stroke-dasharray="3 2" stroke="#60b040" stroke-width="2"/><circle cx="11" cy="11" r="6" fill="#e02020" stroke="#fff"/><path d="M7.500 11h7" stroke="#fff" stroke-width="2"/></svg>
<svg style="left:925px;top:744px" width="19" height="18"><path d="M1 9l9-8 8 8-8 8z" fill="#2060d0" stroke="#000"/><path d="M8 3l4-1 3 4-4 2z" fill="#fff"/></svg>
<svg style="left:942px;top:744px" width="20" height="18" viewBox="0 0 20 18"><path d="M1 0h4v7L10 0h5L9 8l6 10H10L5 10v8H1z" fill="#e0102a"/><path d="M9 8l9 6-3 1 1 3-3-1z" fill="#000"/></svg>
<svg style="left:959px;top:744px" width="17" height="17"><rect x="6" y="1" width="10" height="8" fill="#6878a8" stroke="#223"/><rect x="1" y="7" width="10" height="8" fill="#5a6a98" stroke="#223"/></svg>
<div class="t" style="left:985px;top:746px;color:#fff;letter-spacing:.5px">0:39</div>
</body></html>
